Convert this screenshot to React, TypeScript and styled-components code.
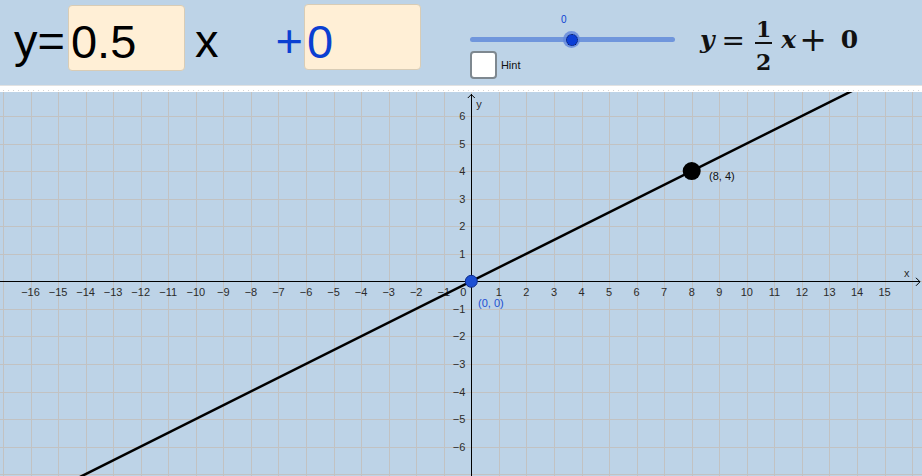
import React from 'react';
import styled, { createGlobalStyle } from 'styled-components';

const GlobalStyle = createGlobalStyle`
  html, body {
    margin: 0;
    padding: 0;
    background: #bdd3e7;
  }
  body {
    font-family: "Liberation Sans", Arial, sans-serif;
    overflow: hidden;
  }
`;

const BLUE = '#0b3fd2';
const BG = '#bdd3e7';

const Page = styled.div`
  width: 922px;
  height: 476px;
  display: flex;
  flex-direction: column;
  background: ${BG};
  overflow: hidden;
`;

const TopBar = styled.header`
  height: 85px;
  flex-shrink: 0;
  display: flex;
  align-items: flex-start;
`;

const BigText = styled.span<{ $ml: number; $color?: string }>`
  margin-left: ${({ $ml }) => $ml}px;
  margin-top: 17px;
  font-size: 47px;
  line-height: 47px;
  color: ${({ $color }) => $color ?? '#000'};
  white-space: nowrap;
`;

const ValueBox = styled.div<{ $ml: number; $top: number; $color?: string }>`
  box-sizing: border-box;
  width: 117px;
  height: 66px;
  margin-left: ${({ $ml }) => $ml}px;
  margin-top: ${({ $top }) => $top}px;
  padding: ${({ $top }) => 17 - $top}px 0 0 2px;
  background: #ffefd6;
  border: 1px solid #d8ccb6;
  border-radius: 4px;
  font-size: 47px;
  line-height: 47px;
  color: ${({ $color }) => $color ?? '#000'};
`;

const SliderGroup = styled.div`
  width: 205px;
  margin-left: 49px;
  display: flex;
  flex-direction: column;
`;

const SliderValue = styled.div`
  margin-top: 14px;
  height: 12px;
  padding-left: 91px;
  font-size: 10px;
  line-height: 12px;
  color: ${BLUE};
`;

const Track = styled.div`
  position: relative;
  height: 5px;
  margin-top: 11px;
  border-radius: 3px;
  background: #7096dc;
`;

const Thumb = styled.div<{ $left: number }>`
  position: absolute;
  left: ${({ $left }) => $left}px;
  top: -6px;
  width: 17px;
  height: 17px;
  border-radius: 50%;
  background: rgba(96, 134, 220, 0.8);
  display: flex;
  align-items: center;
  justify-content: center;

  &::after {
    content: '';
    box-sizing: border-box;
    width: 12px;
    height: 12px;
    border-radius: 50%;
    background: #0c3fd6;
    border: 1px dotted #0a1a50;
  }
`;

const HintRow = styled.label`
  margin-top: 9px;
  display: flex;
  align-items: center;
  gap: 4px;
  font-size: 11px;
  color: #111;
`;

const CheckBox = styled.span`
  box-sizing: border-box;
  width: 27px;
  height: 28px;
  border: 2px solid #7e8890;
  border-radius: 4px;
  background: #fff;
`;

const Formula = styled.div`
  margin-left: 25px;
  height: 85px;
  display: flex;
  align-items: center;
  font-family: "DejaVu Serif", "Liberation Serif", serif;
  font-weight: bold;
  color: #111;
`;

const MathItem = styled.span<{ $italic?: boolean; $ml?: number }>`
  font-size: 25px;
  line-height: 1;
  font-style: ${({ $italic }) => ($italic ? 'italic' : 'normal')};
  margin-left: ${({ $ml }) => $ml ?? 0}px;
  margin-bottom: 6px;
`;

const MathOp = styled(MathItem)<{ $size: number }>`
  font-weight: normal;
  font-size: ${({ $size }) => $size}px;
  margin-bottom: ${({ $size }) => Math.round(($size - 20) / 2)}px;
`;

const Fraction = styled.span<{ $ml: number }>`
  display: inline-flex;
  flex-direction: column;
  align-items: center;
  margin-left: ${({ $ml }) => $ml}px;
  margin-top: 6px;
  font-size: 22px;
  line-height: 22px;
`;

const Numer = styled.span`
  padding: 0 1px 2px;
`;

const Denom = styled.span`
  padding: 7px 1px 0;
`;

const FracBar = styled.span`
  align-self: stretch;
  height: 2px;
  background: #111;
`;

const Divider = styled.div`
  height: 7px;
  flex-shrink: 0;
  box-sizing: border-box;
  border-top: 1px solid #e2e2e2;
  background:
    repeating-linear-gradient(90deg, #d4d4d4 0 1px, transparent 1px 5px) 3px 4px / 100% 1px no-repeat,
    #fff;
`;

const GraphSvg = styled.svg`
  display: block;
  flex-shrink: 0;
  font-family: "Liberation Sans", Arial, sans-serif;
`;

const W = 922;
const H = 384;
const OX = 471.3;
const OY = 189.3;
const U = 27.55;

const px = (v: number) => OX + v * U;
const py = (v: number) => OY - v * U;
const crisp = (v: number) => Math.round(v) + 0.5;
const fmt = (n: number) => (n < 0 ? `\u2212${-n}` : `${n}`);

const range = (a: number, b: number) => Array.from({ length: b - a + 1 }, (_, i) => a + i);

function Graph() {
  const xs = range(-17, 16);
  const ys = range(-7, 6);
  return (
    <GraphSvg width={W} height={H} viewBox={`0 0 ${W} ${H}`}>
      <rect width={W} height={H} fill={BG} />
      <g stroke="#c2c2c2" strokeWidth={1} shapeRendering="crispEdges">
        {xs.map((k) => (
          <line key={`gx${k}`} x1={crisp(px(k))} x2={crisp(px(k))} y1={0} y2={H} />
        ))}
        {ys.map((k) => (
          <line key={`gy${k}`} x1={0} x2={W} y1={crisp(py(k))} y2={crisp(py(k))} />
        ))}
      </g>

      <g stroke="#000" strokeWidth={1} fill="none">
        <line x1={0} x2={920} y1={crisp(OY)} y2={crisp(OY)} shapeRendering="crispEdges" />
        <line x1={crisp(OX)} x2={crisp(OX)} y1={2} y2={H} shapeRendering="crispEdges" />
        <polyline points={`${OX - 3.5},6 ${OX},2.5 ${OX + 3.5},6`} />
        <polyline points={`916,${OY - 3.5} 920,${OY + 0.5} 916,${OY + 4.5}`} />
      </g>

      <g fontSize={11} fill="#2b2b2b">
        {range(-16, 15)
          .filter((k) => k !== 0)
          .map((k) => (
            <text key={`lx${k}`} x={px(k)} y={OY + 15} textAnchor="middle">
              {fmt(k)}
            </text>
          ))}
        <text x={OX - 5} y={OY + 15} textAnchor="end">
          0
        </text>
        {range(-6, 6)
          .filter((k) => k !== 0)
          .map((k) => (
            <text key={`ly${k}`} x={OX - 6} y={py(k) + 4} textAnchor="end">
              {fmt(k)}
            </text>
          ))}
        <text x={OX + 5} y={16}>
          y
        </text>
        <text x={904} y={OY - 4}>
          x
        </text>
      </g>

      <line x1={px(-18)} y1={py(-9)} x2={px(17)} y2={py(8.5)} stroke="#000" strokeWidth={2.5} />

      <circle cx={px(0)} cy={py(0)} r={6} fill="#1c4fd3" stroke="#0e2c8c" strokeWidth={1} />
      <text x={478} y={215} fontSize={11} fill="#1c4fd3">
        (0, 0)
      </text>

      <circle cx={px(8)} cy={py(4)} r={9} fill="#000" />
      <text x={709} y={88} fontSize={11} fill="#111">
        (8, 4)
      </text>
    </GraphSvg>
  );
}

export default function App() {
  return (
    <Page>
      <GlobalStyle />
      <TopBar>
        <BigText $ml={14}>y=</BigText>
        <ValueBox $ml={3} $top={5}>
          0.5
        </ValueBox>
        <BigText $ml={10}>x</BigText>
        <BigText $ml={57} $color={BLUE}>
          +
        </BigText>
        <ValueBox $ml={1} $top={4} $color={BLUE}>
          0
        </ValueBox>

        <SliderGroup>
          <SliderValue>0</SliderValue>
          <Track>
            <Thumb $left={93.5} />
          </Track>
          <HintRow>
            <CheckBox />
            Hint
          </HintRow>
        </SliderGroup>

        <Formula>
          <MathItem $italic>y</MathItem>
          <MathOp $size={28} $ml={7}>
            =
          </MathOp>
          <Fraction $ml={10}>
            <Numer>1</Numer>
            <FracBar />
            <Denom>2</Denom>
          </Fraction>
          <MathItem $italic $ml={9}>
            x
          </MathItem>
          <MathOp $size={33} $ml={3}>
            +
          </MathOp>
          <MathItem $ml={14}>0</MathItem>
        </Formula>
      </TopBar>
      <Divider />
      <Graph />
    </Page>
  );
}
